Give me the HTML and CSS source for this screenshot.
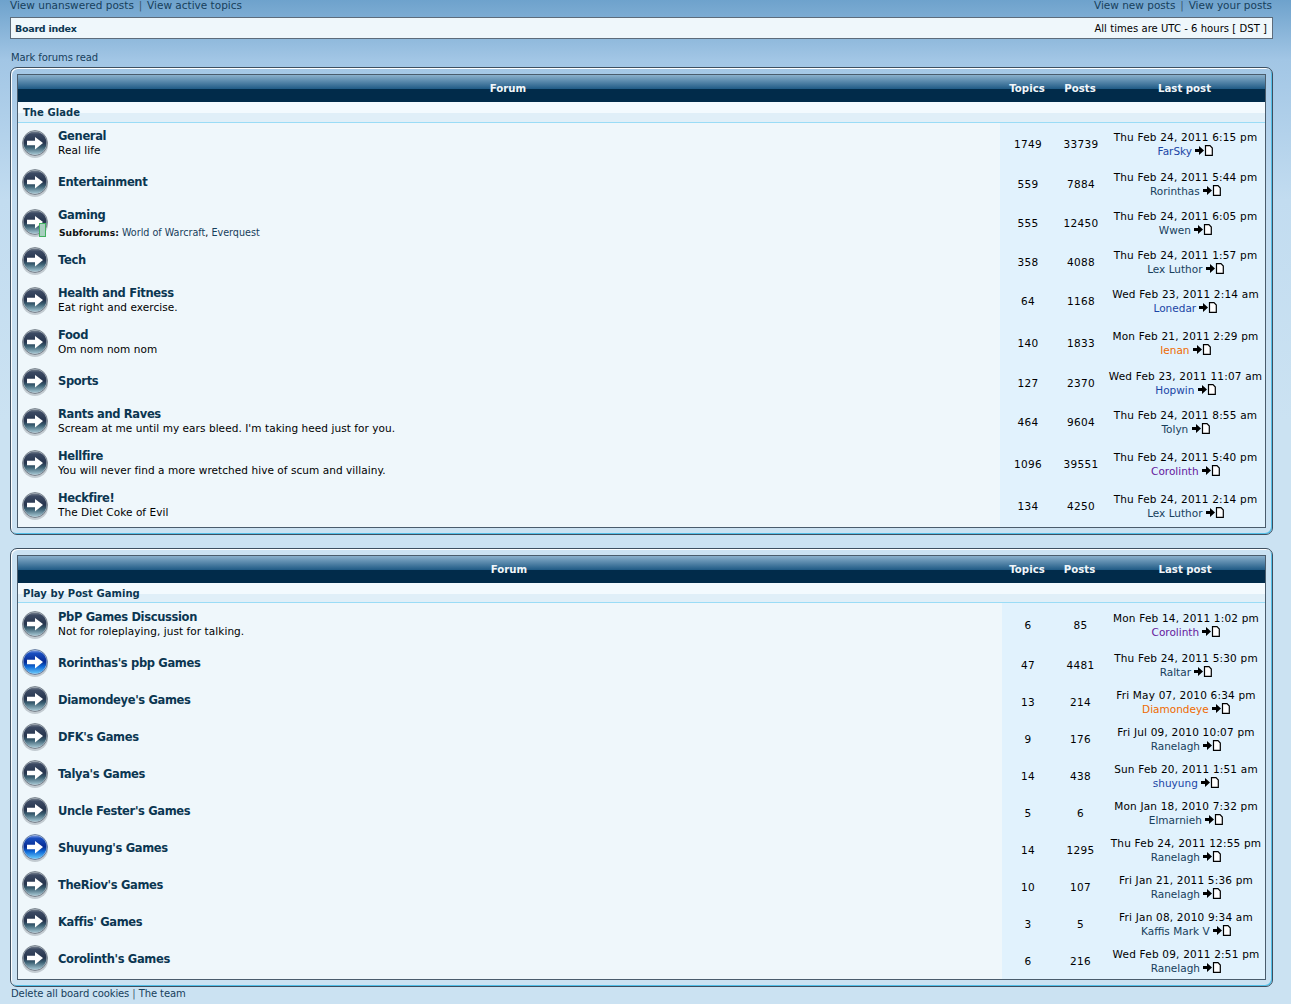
FILE: index.html
```html
<!DOCTYPE html>
<html lang="en">
<head>
<meta charset="utf-8">
<title>Board index</title>
<link rel="stylesheet" href="styles.css">
</head>
<body>
<svg class="defs" width="0" height="0" aria-hidden="true">
  <defs>
    <linearGradient id="gr" x1="0" y1="0" x2="0" y2="1">
      <stop offset="0" stop-color="#77828f"/><stop offset=".12" stop-color="#3c4a63"/><stop offset=".5" stop-color="#25344d"/><stop offset=".68" stop-color="#3a5f72"/><stop offset="1" stop-color="#a5c6d2"/>
    </linearGradient>
    <linearGradient id="bl" x1="0" y1="0" x2="0" y2="1">
      <stop offset="0" stop-color="#7f9ce0"/><stop offset=".12" stop-color="#1a4fc0"/><stop offset=".5" stop-color="#052a92"/><stop offset=".7" stop-color="#0f6ad8"/><stop offset="1" stop-color="#66c6f8"/>
    </linearGradient>
    <symbol id="arrow" viewBox="0 0 26 28">
      <path d="M5 10.800h8V7l8 6-8 6.500v-4.200H5z" fill="#fff"/>
    </symbol>
    <symbol id="read" viewBox="0 0 26 28">
      <ellipse cx="13" cy="15.500" rx="13" ry="12.500" fill="#5e6872" opacity=".3"/>
      <circle cx="13" cy="13" r="12.400" fill="#c9d1d8" stroke="#4b5663" stroke-width=".7"/>
      <circle cx="13" cy="13" r="11.500" fill="url(#gr)"/>
      <use href="#arrow" width="26" height="28"/>
    </symbol>
    <symbol id="new" viewBox="0 0 26 28">
      <ellipse cx="13" cy="15.500" rx="13" ry="12.500" fill="#5e6872" opacity=".3"/>
      <circle cx="13" cy="13" r="12.400" fill="#c5d6ee" stroke="#2f4a78" stroke-width=".7"/>
      <circle cx="13" cy="13" r="11.500" fill="url(#bl)"/>
      <use href="#arrow" width="26" height="28"/>
    </symbol>
    <symbol id="post" viewBox="0 0 18 11">
      <path d="M0 4h4V1l5 4.500-5 4.500V7H0z" fill="#000"/>
      <path d="M10.500.700h4.500l2.300 2.300v7.300h-6.800z" fill="#fff" stroke="#000" stroke-width="1.200"/>
    </symbol>
  </defs>
</svg>

<nav class="topnav">
  <div><a>View unanswered posts</a> <span class="sep">|</span> <a>View active topics</a></div>
  <div><a>View new posts</a> <span class="sep">|</span> <a>View your posts</a></div>
</nav>

<div class="crumbs">
  <strong>Board index</strong>
  <span>All times are UTC - 6 hours [ DST ]</span>
</div>

<p class="mark"><a>Mark forums read</a></p>

<section class="panel first">
<table class="forums one">
  <colgroup><col class="c-main"><col class="c-topics"><col class="c-posts"><col class="c-last"></colgroup>
  <thead><tr><th>Forum</th><th>Topics</th><th>Posts</th><th>Last post</th></tr></thead>
  <tbody>
    <tr class="cat"><td colspan="4">The Glade</td></tr>
    <tr class="h42"><td class="main"><div class="cell"><svg class="ico"><use href="#read"/></svg><div class="txt"><a class="title">General</a><div class="desc">Real life</div></div></div></td><td class="num">1749</td><td class="num">33739</td><td class="last"><span class="date">Thu Feb 24, 2011 6:15 pm</span><br><a class="blue">FarSky</a> <svg class="pi"><use href="#post"/></svg></td></tr>
    <tr class="h38"><td class="main"><div class="cell solo"><svg class="ico"><use href="#read"/></svg><div><a class="title">Entertainment</a></div></div></td><td class="num">559</td><td class="num">7884</td><td class="last"><span class="date">Thu Feb 24, 2011 5:44 pm</span><br><a>Rorinthas</a> <svg class="pi"><use href="#post"/></svg></td></tr>
    <tr class="h40"><td class="main"><div class="cell"><span class="icowrap"><svg class="ico"><use href="#read"/></svg><i class="subbadge"></i></span><div class="subtxt"><a class="title">Gaming</a><div class="subs"><b>Subforums:</b> <a>World of Warcraft</a>, <a>Everquest</a></div></div></div></td><td class="num">555</td><td class="num">12450</td><td class="last"><span class="date">Thu Feb 24, 2011 6:05 pm</span><br><a>Wwen</a> <svg class="pi"><use href="#post"/></svg></td></tr>
    <tr class="h38"><td class="main"><div class="cell solo"><svg class="ico"><use href="#read"/></svg><div><a class="title">Tech</a></div></div></td><td class="num">358</td><td class="num">4088</td><td class="last"><span class="date">Thu Feb 24, 2011 1:57 pm</span><br><a>Lex Luthor</a> <svg class="pi"><use href="#post"/></svg></td></tr>
    <tr class="h40"><td class="main"><div class="cell"><svg class="ico"><use href="#read"/></svg><div class="txt"><a class="title">Health and Fitness</a><div class="desc">Eat right and exercise.</div></div></div></td><td class="num">64</td><td class="num">1168</td><td class="last"><span class="date">Wed Feb 23, 2011 2:14 am</span><br><a class="blue">Lonedar</a> <svg class="pi"><use href="#post"/></svg></td></tr>
    <tr class="h44"><td class="main"><div class="cell"><svg class="ico"><use href="#read"/></svg><div class="txt"><a class="title">Food</a><div class="desc">Om nom nom nom</div></div></div></td><td class="num">140</td><td class="num">1833</td><td class="last"><span class="date">Mon Feb 21, 2011 2:29 pm</span><br><a class="orange">Ienan</a> <svg class="pi"><use href="#post"/></svg></td></tr>
    <tr class="h36"><td class="main"><div class="cell solo"><svg class="ico"><use href="#read"/></svg><div><a class="title">Sports</a></div></div></td><td class="num">127</td><td class="num">2370</td><td class="last"><span class="date">Wed Feb 23, 2011 11:07 am</span><br><a class="blue">Hopwin</a> <svg class="pi"><use href="#post"/></svg></td></tr>
    <tr class="h42"><td class="main"><div class="cell"><svg class="ico"><use href="#read"/></svg><div class="txt"><a class="title">Rants and Raves</a><div class="desc">Scream at me until my ears bleed. I'm taking heed just for you.</div></div></div></td><td class="num">464</td><td class="num">9604</td><td class="last"><span class="date">Thu Feb 24, 2011 8:55 am</span><br><a>Tolyn</a> <svg class="pi"><use href="#post"/></svg></td></tr>
    <tr class="h42"><td class="main"><div class="cell"><svg class="ico"><use href="#read"/></svg><div class="txt"><a class="title">Hellfire</a><div class="desc">You will never find a more wretched hive of scum and villainy.</div></div></div></td><td class="num">1096</td><td class="num">39551</td><td class="last"><span class="date">Thu Feb 24, 2011 5:40 pm</span><br><a class="purple">Corolinth</a> <svg class="pi"><use href="#post"/></svg></td></tr>
    <tr class="h42"><td class="main"><div class="cell"><svg class="ico"><use href="#read"/></svg><div class="txt"><a class="title">Heckfire!</a><div class="desc">The Diet Coke of Evil</div></div></div></td><td class="num">134</td><td class="num">4250</td><td class="last"><span class="date">Thu Feb 24, 2011 2:14 pm</span><br><a>Lex Luthor</a> <svg class="pi"><use href="#post"/></svg></td></tr>
  </tbody>
</table>
</section>

<section class="panel second">
<table class="forums two">
  <colgroup><col class="c-main"><col class="c-topics"><col class="c-posts"><col class="c-last"></colgroup>
  <thead><tr><th>Forum</th><th>Topics</th><th>Posts</th><th>Last post</th></tr></thead>
  <tbody>
    <tr class="cat"><td colspan="4">Play by Post Gaming</td></tr>
    <tr class="h43"><td class="main"><div class="cell"><svg class="ico"><use href="#read"/></svg><div class="txt"><a class="title">PbP Games Discussion</a><div class="desc">Not for roleplaying, just for talking.</div></div></div></td><td class="num">6</td><td class="num">85</td><td class="last"><span class="date">Mon Feb 14, 2011 1:02 pm</span><br><a class="purple">Corolinth</a> <svg class="pi"><use href="#post"/></svg></td></tr>
    <tr class="h37"><td class="main"><div class="cell solo"><svg class="ico"><use href="#new"/></svg><div><a class="title">Rorinthas's pbp Games</a></div></div></td><td class="num">47</td><td class="num">4481</td><td class="last"><span class="date">Thu Feb 24, 2011 5:30 pm</span><br><a>Raltar</a> <svg class="pi"><use href="#post"/></svg></td></tr>
    <tr class="h37"><td class="main"><div class="cell solo"><svg class="ico"><use href="#read"/></svg><div><a class="title">Diamondeye's Games</a></div></div></td><td class="num">13</td><td class="num">214</td><td class="last"><span class="date">Fri May 07, 2010 6:34 pm</span><br><a class="orange">Diamondeye</a> <svg class="pi"><use href="#post"/></svg></td></tr>
    <tr class="h37"><td class="main"><div class="cell solo"><svg class="ico"><use href="#read"/></svg><div><a class="title">DFK's Games</a></div></div></td><td class="num">9</td><td class="num">176</td><td class="last"><span class="date">Fri Jul 09, 2010 10:07 pm</span><br><a>Ranelagh</a> <svg class="pi"><use href="#post"/></svg></td></tr>
    <tr class="h37"><td class="main"><div class="cell solo"><svg class="ico"><use href="#read"/></svg><div><a class="title">Talya's Games</a></div></div></td><td class="num">14</td><td class="num">438</td><td class="last"><span class="date">Sun Feb 20, 2011 1:51 am</span><br><a class="blue">shuyung</a> <svg class="pi"><use href="#post"/></svg></td></tr>
    <tr class="h37"><td class="main"><div class="cell solo"><svg class="ico"><use href="#read"/></svg><div><a class="title">Uncle Fester's Games</a></div></div></td><td class="num">5</td><td class="num">6</td><td class="last"><span class="date">Mon Jan 18, 2010 7:32 pm</span><br><a>Elmarnieh</a> <svg class="pi"><use href="#post"/></svg></td></tr>
    <tr class="h37"><td class="main"><div class="cell solo"><svg class="ico"><use href="#new"/></svg><div><a class="title">Shuyung's Games</a></div></div></td><td class="num">14</td><td class="num">1295</td><td class="last"><span class="date">Thu Feb 24, 2011 12:55 pm</span><br><a>Ranelagh</a> <svg class="pi"><use href="#post"/></svg></td></tr>
    <tr class="h37"><td class="main"><div class="cell solo"><svg class="ico"><use href="#read"/></svg><div><a class="title">TheRiov's Games</a></div></div></td><td class="num">10</td><td class="num">107</td><td class="last"><span class="date">Fri Jan 21, 2011 5:36 pm</span><br><a>Ranelagh</a> <svg class="pi"><use href="#post"/></svg></td></tr>
    <tr class="h37"><td class="main"><div class="cell solo"><svg class="ico"><use href="#read"/></svg><div><a class="title">Kaffis' Games</a></div></div></td><td class="num">3</td><td class="num">5</td><td class="last"><span class="date">Fri Jan 08, 2010 9:34 am</span><br><a>Kaffis Mark V</a> <svg class="pi"><use href="#post"/></svg></td></tr>
    <tr class="h37"><td class="main"><div class="cell solo"><svg class="ico"><use href="#read"/></svg><div><a class="title">Corolinth's Games</a></div></div></td><td class="num">6</td><td class="num">216</td><td class="last"><span class="date">Wed Feb 09, 2011 2:51 pm</span><br><a>Ranelagh</a> <svg class="pi"><use href="#post"/></svg></td></tr>
  </tbody>
</table>
</section>

<footer class="foot"><a>Delete all board cookies</a> <span class="sep">|</span> <a>The team</a></footer>
</body>
</html>
```
FILE: styles.css
```css
html, body { margin: 0; padding: 0; }
html { height: 100%; overflow: hidden; }
body {
  height: 1004px;
  overflow: hidden;
  font-family: "DejaVu Sans", sans-serif;
  font-size: 10.5px;
  line-height: 14px;
  color: #000;
  background: linear-gradient(to bottom, #6ea2cc 0, #a2c6e5 60px, #c2dcf0 200px, #cbe2f2 420px, #cbe2f2 100%);
}
a { color: #17405c; }
.sep { color: #3c5870; margin: 0 1.500px; }
.defs { position: absolute; }

.topnav {
  display: flex;
  justify-content: space-between;
  height: 11px;
  line-height: 11px;
  padding: 0 19px 0 10px;
  margin-bottom: 6px;
}

.crumbs {
  display: flex;
  justify-content: space-between;
  align-items: center;
  box-sizing: border-box;
  height: 22px;
  margin: 0 18px 0 10px;
  padding: 1px 5px 0 4px;
  font-size: 10px;
  letter-spacing: .05px;
  background: #eff7fb;
  border: 1px solid #5d6c7b;
}
.crumbs strong { color: #0b3651; font-size: 9.5px; letter-spacing: -.25px; }

.mark { margin: 12px 0 2px 11px; line-height: 14px; font-size: 10px; letter-spacing: -.1px; }

.panel {
  box-sizing: border-box;
  width: 1263px;
  margin-left: 10px;
  border: 1px solid #3d4f60;
  border-radius: 7px;
  padding: 6px;
  box-shadow: inset 1px 1px 0 #fff, inset -1px -1px 0 #52bfe8;
}
.panel.second { margin-top: 13px; }

.forums {
  table-layout: fixed;
  border-collapse: separate;
  border-spacing: 0;
  width: 1249px;
  border: 1px solid #4a5c6c;
  background: #eff7fb;
}
.forums th {
  height: 27px;
  padding: 0 2px 0 0;
  color: #f1f6fa;
  font-size: 10.2px;
  font-weight: bold;
  background: linear-gradient(to bottom, #8ab0cc 0, #1f5a85 14px, #012b4a 14px, #012b4a 100%);
}
.forums td { padding: 0; }
.one .c-main { width: 982px; }
.one .c-topics { width: 56px; }
.one .c-posts { width: 50px; }
.one .c-last { width: 159px; }
.two .c-main { width: 984px; }
.two .c-topics { width: 52px; }
.two .c-posts { width: 53px; }
.two .c-last { width: 158px; }

.forums .cat td {
  box-sizing: border-box;
  height: 21px;
  padding: 2px 0 0 5px;
  color: #0b3651;
  font-size: 10px;
  letter-spacing: .05px;
  font-weight: bold;
  background: linear-gradient(to bottom, #f3fafe 0, #f3fafe 11px, #e0eff8 11px, #e0eff8 100%);
  border-bottom: 1px solid #9adcf6;
}
.two .cat td { height: 20px; }

.h36 { height: 36px; }
.h37 { height: 37px; }
.h38 { height: 38px; }
.h40 { height: 40px; }
.h42 { height: 42px; }
.h43 { height: 43px; }
.h44 { height: 44px; }

.cell { display: flex; align-items: center; padding-left: 4px; }
.cell.solo { padding-bottom: 3px; }
.txt { padding-bottom: 2px; }
.subtxt { padding-top: 2px; }
.ico { display: block; width: 26px; height: 28px; margin-right: 10px; flex: none; }
.icowrap { position: relative; display: block; flex: none; }
.subbadge {
  position: absolute;
  left: 17px;
  top: 14px;
  width: 5px;
  height: 12px;
  background: #a9cfc0;
  border: 1px solid #42b060;
}
.title { font-size: 11.5px; font-weight: bold; letter-spacing: -.35px; color: #0b3651; line-height: 15px; display: block; }
.desc { line-height: 13px; letter-spacing: .06px; }
.subs { margin-top: 3px; padding-left: 1px; font-size: 9.6px; }
.subs b { color: #111; font-size: 9.2px; }

.forums .num, .forums .last { background: #e1f2fd; text-align: center; }
.forums .num { letter-spacing: .3px; }
.date { letter-spacing: .2px; }
.last a { color: #17405c; }
.last a.blue { color: #1a45a5; }
.last a.orange { color: #ee6a00; }
.last a.purple { color: #65189c; }
.pi { display: inline-block; width: 18px; height: 11px; vertical-align: -1px; }

.foot { margin: 0 0 0 11px; line-height: 14px; font-size: 10px; letter-spacing: -.1px; }
.foot .sep { margin: 0; }
```
